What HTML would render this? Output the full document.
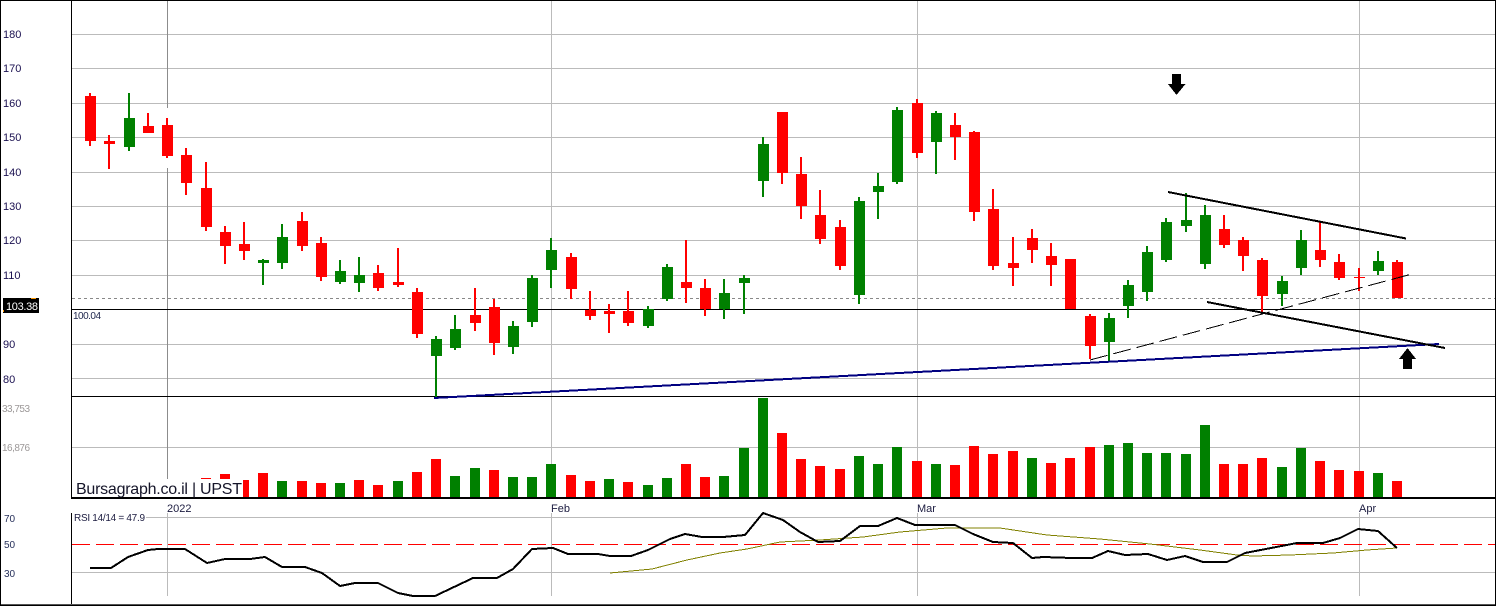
<!DOCTYPE html>
<html><head><meta charset="utf-8"><style>
html,body{margin:0;padding:0;background:#fff;width:1496px;height:606px;overflow:hidden}
svg{display:block}
text{font-family:"Liberation Sans",Arial,sans-serif}
.g{shape-rendering:crispEdges;fill:none}
</style></head><body>
<svg width="1496" height="606" viewBox="0 0 1496 606" xmlns="http://www.w3.org/2000/svg">
<rect width="1496" height="606" fill="#fff"/>
<g class="g">
<path stroke="#bbb" stroke-width="1" d="M72 34.5H1495M72 68.5H1495M72 103.5H1495M72 137.5H1495M72 172.5H1495M72 206.5H1495M72 240.5H1495M72 275.5H1495M72 344.5H1495M72 378.5H1495M72 447.5H1495M146 517.5H1495M72 572.5H1495"/>
<path stroke="#bbb" stroke-width="1" d="M551.5 1V497M917.5 1V497M1359.5 1V497M167.5 513V596M551.5 513V596M917.5 513V596M1359.5 513V596"/>
<path stroke="#8c8c8c" stroke-width="1" d="M167.5 1V108M167.5 168V479"/>
<path stroke="#888" stroke-width="1" stroke-dasharray="3 3" d="M72 298.5H1495"/>
<path stroke="#000" stroke-width="1" d="M72 309.5H1495M72 396.5H1495"/>
<path stroke="#f00" stroke-width="1" stroke-dasharray="18 6" d="M72 544.5H1495"/>

<!-- red wicks -->
<path stroke="#f00" stroke-width="2" d="M90 93V146M109 135V169M148 113V133M167 118V158M186 148V195M206 162V231M225 226V264M244 222V260M302 212V251M321 237V281M378 265V291M398 248V287M417 288V338M475 288V331M494 299V355M571 253V299M590 291V320M609 304V333M628 291V326M686 240V303M705 279V316M782 112V184M801 157V219M820 190V244M840 220V270M917 99V158M955 113V160M974 131V221M993 189V270M1013 237V286M1032 229V263M1051 243V286M1090 314V359M1224 215V248M1243 237V271M1262 258V312M1320 222V267M1339 254V280M1359 268V291M1397 260V298"/>
<!-- red bodies -->
<path stroke="#f00" stroke-width="11" d="M90.5 96V141M109.5 141V144M148.5 126V133M167.5 125V156M186.5 155V183M206.5 188V227M225.5 232V246M244.5 244V251M302.5 221V246M321.5 243V277M378.5 273V288M398.5 282V285M417.5 292V334M475.5 315V323M494.5 307V343M571.5 257V289M590.5 310V316M609.5 311V314M628.5 311V323M686.5 282V288M705.5 288V309M782.5 112V173M801.5 174V206M820.5 215V239M840.5 227V266M917.5 103V153M955.5 125V137M974.5 132V212M993.5 209V266M1013.5 263V268M1032.5 238V250M1051.5 256V265M1070.5 259V309M1090.5 316V346M1224.5 229V245M1243.5 240V256M1262.5 260V296M1320.5 250V260M1339.5 262V278M1397.5 262V298"/>
<path stroke="#f00" stroke-width="1" d="M1354 277.5H1365"/>
<!-- green wicks -->
<path stroke="#008000" stroke-width="2" d="M129 93V151M263 259V285M282 224V269M340 260V284M359 257V292M436 336V397M455 315V350M513 321V354M532 275V327M551 238V288M648 306V328M667 264V301M724 279V319M744 275V314M763 137V197M859 197V304M878 173V219M897 107V184M936 111V174M1109 313V361M1128 280V318M1147 246V301M1166 218V262M1186 193V232M1205 205V269M1282 276V306M1301 230V275M1378 251V275"/>
<!-- green bodies -->
<path stroke="#008000" stroke-width="11" d="M129.5 118V147M263.5 260V263M282.5 237V263M340.5 271V282M359.5 275V283M436.5 339V356M455.5 329V348M513.5 326V347M532.5 278V322M551.5 250V270M648.5 309V326M667.5 267V299M724.5 293V309M744.5 278V283M763.5 144V181M859.5 201V295M878.5 186V192M897.5 110V182M936.5 113V142M1109.5 318V342M1128.5 285V306M1147.5 252V292M1166.5 222V260M1186.5 220V226M1205.5 215V264M1282.5 281V294M1301.5 240V268M1378.5 261V271"/>

<!-- volume -->
<path stroke="#f00" stroke-width="10" d="M206 478V497M225 474V497M244 480V497M263 473V497M302 481V497M321 483V497M359 480V497M378 485V497M417 472V497M436 459V497M494 470V497M571 475V497M590 481V497M628 482V497M686 464V497M705 477V497M782 433V497M801 459V497M820 466V497M840 469V497M917 461V497M955 465V497M974 446V497M993 454V497M1013 451V497M1051 463V497M1070 458V497M1090 447V497M1224 464V497M1243 464V497M1262 458V497M1320 461V497M1339 470V497M1359 471V497M1397 481V497"/>
<path stroke="#008000" stroke-width="10" d="M282 481V497M340 483V497M398 481V497M455 476V497M475 468V497M513 477V497M532 477V497M551 464V497M609 479V497M648 485V497M667 478V497M724 476V497M744 448V497M763 398V497M859 456V497M878 464V497M897 447V497M936 464V497M1032 458V497M1109 445V497M1128 443V497M1147 453V497M1166 453V497M1186 454V497M1205 425V497M1282 467V497M1301 448V497M1378 473V497"/>
</g>
<rect x="75" y="479" width="168" height="18" fill="#fff"/>
<rect x="71" y="497" width="1425" height="2" fill="#000" shape-rendering="crispEdges"/>
<rect x="71" y="1" width="1" height="496" fill="#000" shape-rendering="crispEdges"/>
<rect x="71" y="513" width="1" height="91" fill="#000" shape-rendering="crispEdges"/>

<g class="g">
<!-- trendlines -->
<path stroke="#000" stroke-width="1" stroke-dasharray="18 6" d="M1090 360L1412 274"/>
<path stroke="#000080" stroke-width="2" d="M434 398L1439 344"/>
<path stroke="#000" stroke-width="2" d="M1168 192L1406 238.5M1207 302L1445 348"/>
<!-- RSI -->
<path stroke="#808000" stroke-width="1" d="M610 573L652 569L687 560L720 553L747 549L780 542L820 540L863 537L900 532L947 528L1000 528L1047 535L1100 539L1150 544L1200 550L1237 555L1253 556L1290 555L1333 553L1367 550L1397 548"/>
<path stroke="#000" stroke-width="2" stroke-linejoin="round" d="M90 568L111 568L128 557L148 550L158 549L185 549L207 563L225 559L250 559L265 557L282 567L305 567L322 573L340 586L355 583L378 583L398 593L413 596L435 596L473 578L497 578L513 569L532 549L553 548L568 554L598 554L610 556L631 556L648 550L670 539L685 534L702 537L723 537L745 535L763 513L783 520L800 532L818 542L840 541L860 526L878 526L897 518L915 525L955 525L973 534L993 542L1013 543L1032 558L1043 557L1072 558L1092 558L1108 551L1125 555L1148 554L1167 560L1185 556L1203 562L1227 562L1245 553L1297 543L1323 543L1340 538L1358 529L1378 531L1397 548"/>
</g>
<!-- arrows -->
<path fill="#000" shape-rendering="crispEdges" d="M1172 74H1181V84H1185.5L1176.5 95L1168 84H1172Z"/>
<path fill="#000" shape-rendering="crispEdges" d="M1407.5 348L1416 359H1412V369H1403V359H1399Z"/>

<!-- frame -->
<g fill="#000" shape-rendering="crispEdges">
<rect x="0" y="0" width="1496" height="1"/>
<rect x="0" y="0" width="1" height="606"/>
<rect x="1495" y="0" width="1" height="606"/>
<rect x="0" y="605" width="1496" height="1"/>
</g>
<rect x="1" y="604" width="1494" height="1" fill="#555" shape-rendering="crispEdges"/>

<!-- axis labels -->
<g font-size="11" fill="#1a1050">
<text x="3" y="38">180</text>
<text x="3" y="72">170</text>
<text x="3" y="107">160</text>
<text x="3" y="141">150</text>
<text x="3" y="176">140</text>
<text x="3" y="210">130</text>
<text x="3" y="244">120</text>
<text x="3" y="279">110</text>
<text x="3" y="348">90</text>
<text x="3" y="383">80</text>
</g>
<rect x="3" y="298" width="36" height="15" fill="#000" shape-rendering="crispEdges"/>
<rect x="31" y="298" width="5" height="1" fill="#f90" shape-rendering="crispEdges"/>
<rect x="3" y="310" width="1" height="2" fill="#f90" shape-rendering="crispEdges"/>
<text x="6" y="310" font-size="11" fill="#fff" textLength="32" lengthAdjust="spacing">103.38</text>
<text x="73" y="319" font-size="10" fill="#222a50" textLength="28" lengthAdjust="spacing">100.04</text>
<text x="2" y="412" font-size="10" fill="#9c9898" textLength="28" lengthAdjust="spacing">33,753</text>
<text x="2" y="451" font-size="10" fill="#9c9898" textLength="28" lengthAdjust="spacing">16,876</text>
<text x="76" y="494" font-size="16" fill="#141428" textLength="166" lengthAdjust="spacing">Bursagraph.co.il | UPST</text>
<g font-size="11" fill="#1c1c40">
<text x="167" y="512">2022</text>
<text x="551" y="512">Feb</text>
<text x="917" y="512">Mar</text>
<text x="1359" y="512">Apr</text>
</g>
<text x="74" y="521" font-size="10" fill="#1c1c40" textLength="71" lengthAdjust="spacing">RSI 14/14 = 47.9</text>
<g font-size="10" fill="#26305a">
<text x="4" y="522">70</text>
<text x="4" y="548">50</text>
<text x="4" y="577">30</text>
</g>
</svg>
</body></html>
